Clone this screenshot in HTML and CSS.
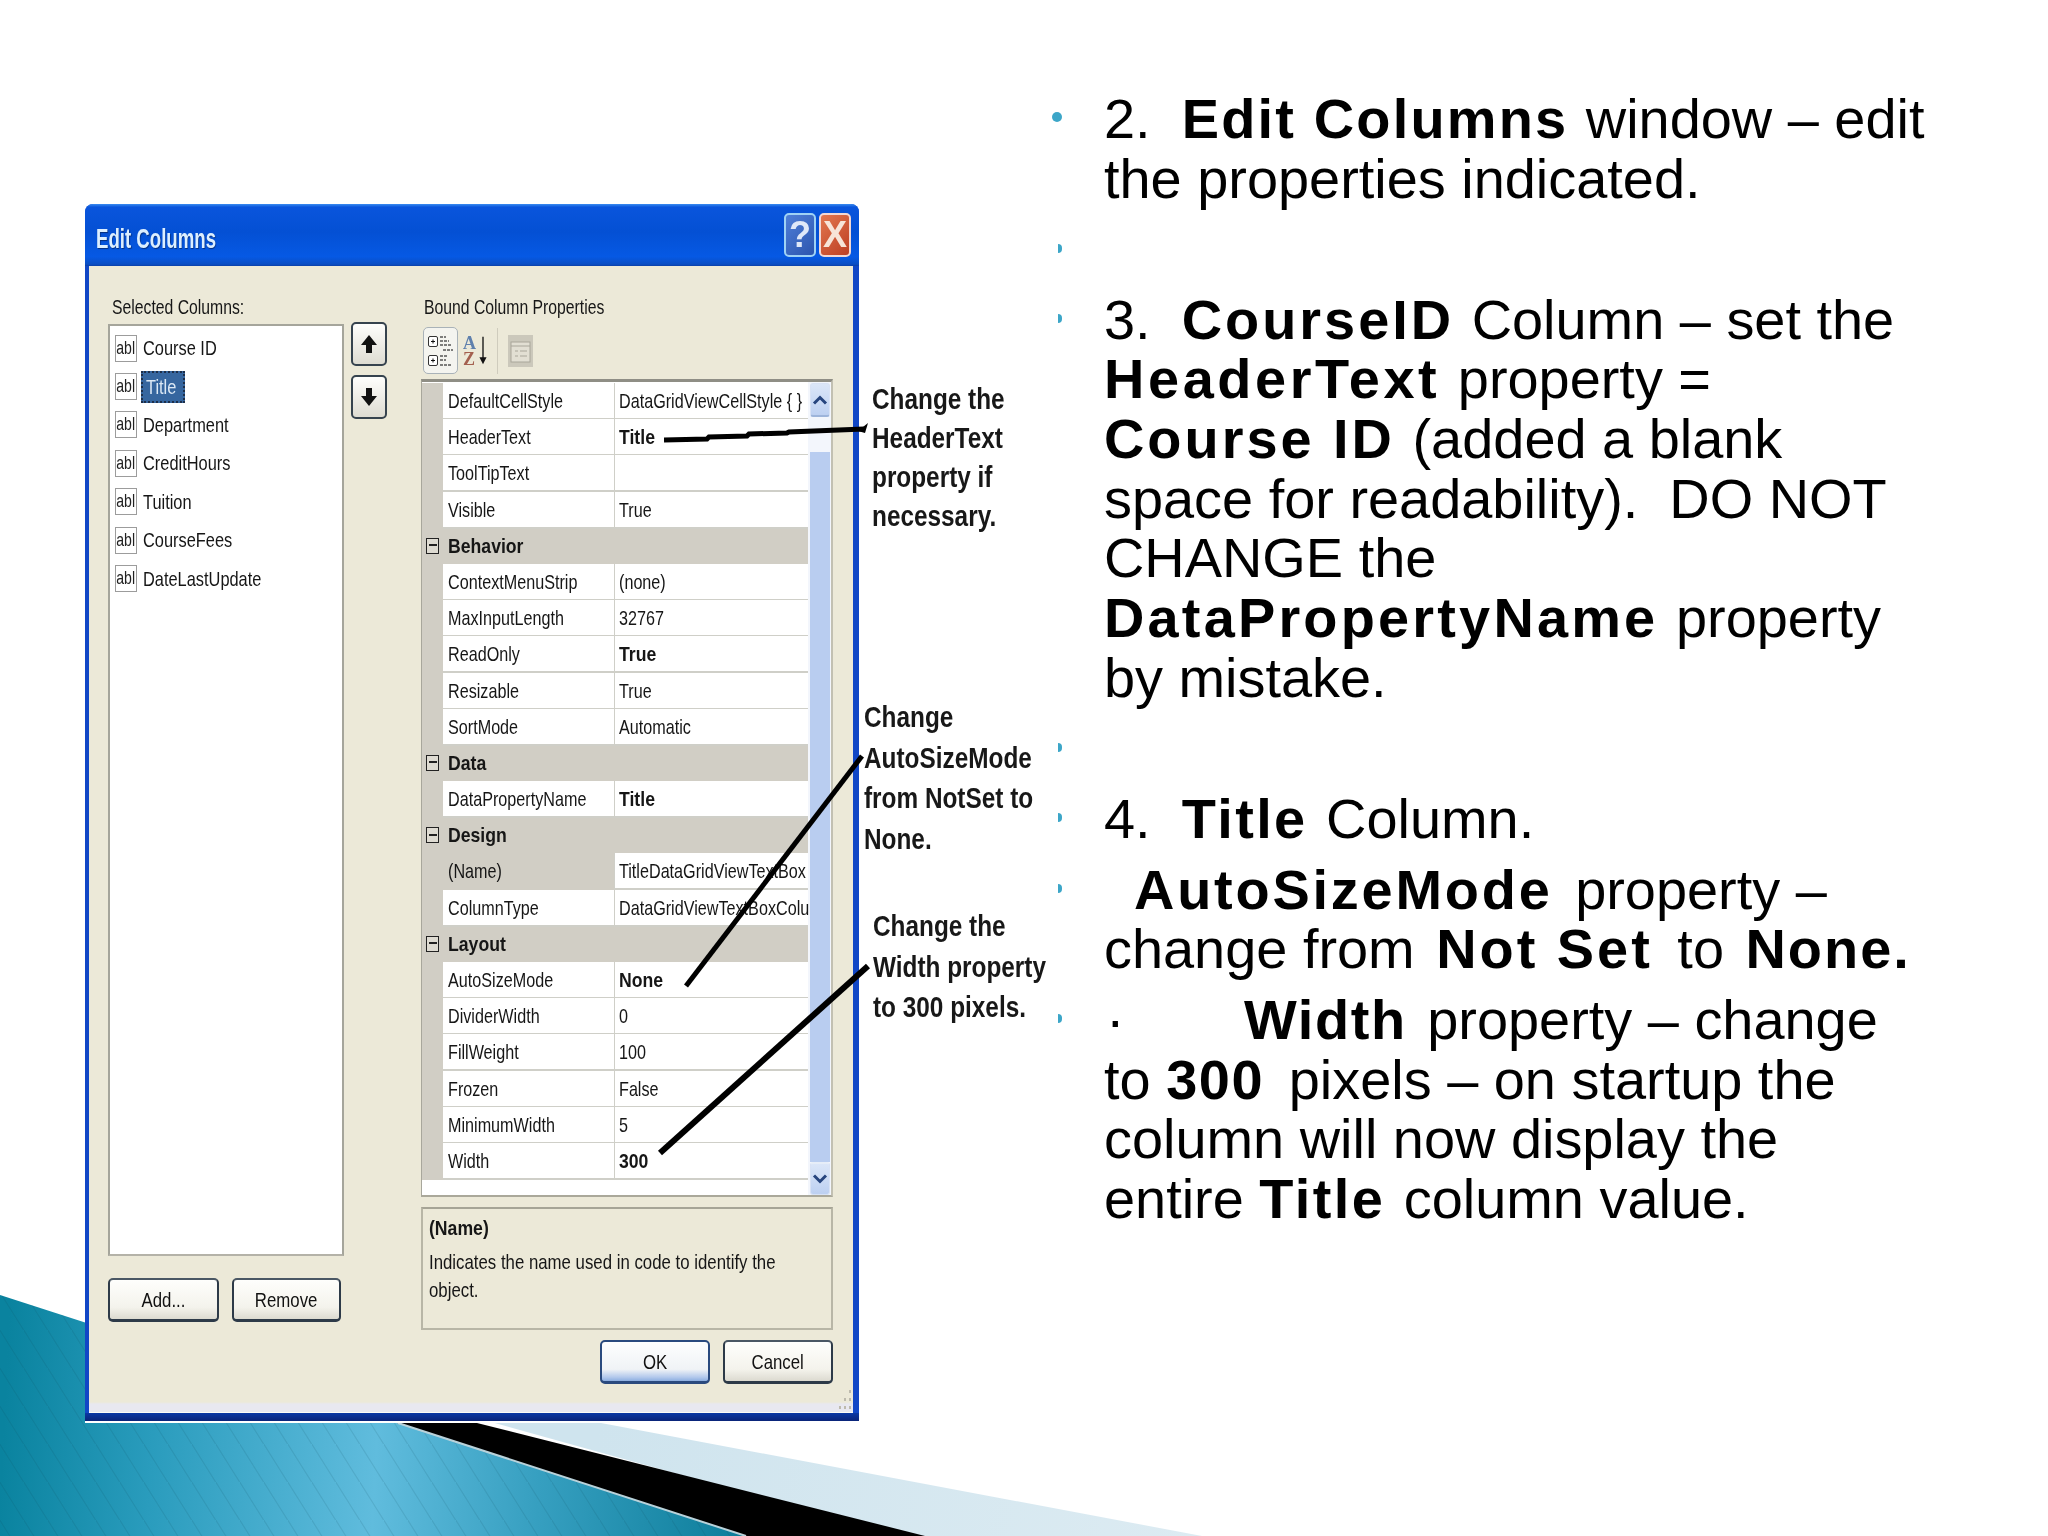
FILE: index.html
```html
<!DOCTYPE html>
<html lang="en">
<head>
<meta charset="utf-8">
<title>Edit Columns</title>
<link rel="stylesheet" href="styles.css">
</head>
<body>
<div class="slide">
  <svg class="deco" width="2048" height="1536" viewBox="0 0 2048 1536" aria-hidden="true">
    <defs>
      <linearGradient id="teal" gradientUnits="userSpaceOnUse" x1="0" y1="1500" x2="746" y2="1536">
        <stop offset="0" stop-color="#0a839f"/>
        <stop offset="0.2" stop-color="#2a9cbd"/>
        <stop offset="0.5" stop-color="#60bcdd"/>
        <stop offset="0.72" stop-color="#369fc0"/>
        <stop offset="1" stop-color="#0c7d9a"/>
      </linearGradient>
      <linearGradient id="pale" gradientUnits="userSpaceOnUse" x1="600" y1="1420" x2="1200" y2="1536">
        <stop offset="0" stop-color="#cfe4ee"/>
        <stop offset="1" stop-color="#dcebf2"/>
      </linearGradient>
      <pattern id="stripes" width="24" height="38" patternUnits="userSpaceOnUse">
        <path d="M-4 -6 L28 45" stroke="#063f52" stroke-opacity="0.12" stroke-width="1.2"/>
      </pattern>
    </defs>
    <polygon fill="url(#pale)" points="90,1310 601,1423 1202,1536 900,1536"/>
    <polygon fill="#000" points="112,1331 477,1423 925,1536 746,1536"/>
    <polygon fill="url(#teal)" points="0,1295 746,1536 0,1536"/>
    <polygon fill="url(#stripes)" points="0,1295 746,1536 0,1536"/>
    <path d="M398 1423 L746 1536" stroke="#b9d2da" stroke-width="2"/>
  </svg>

  <section class="dialog">
    <header class="titlebar">
      <span class="title"><span class="t">Edit Columns</span></span>
      <span class="caption-btns">
        <span class="cap-btn help">?</span>
        <span class="cap-btn close">X</span>
      </span>
    </header>
    <div class="dialog-body">
      <div class="left-pane">
        <div class="label"><span class="t">Selected Columns:</span></div>
        <ul class="col-list">
          <li class="col-item"><span class="abl"><span class="t">abl</span></span><span class="col-name"><span class="t">Course ID</span></span></li>
          <li class="col-item"><span class="abl"><span class="t">abl</span></span><span class="col-name selected"><span class="t">Title</span></span></li>
          <li class="col-item"><span class="abl"><span class="t">abl</span></span><span class="col-name"><span class="t">Department</span></span></li>
          <li class="col-item"><span class="abl"><span class="t">abl</span></span><span class="col-name"><span class="t">CreditHours</span></span></li>
          <li class="col-item"><span class="abl"><span class="t">abl</span></span><span class="col-name"><span class="t">Tuition</span></span></li>
          <li class="col-item"><span class="abl"><span class="t">abl</span></span><span class="col-name"><span class="t">CourseFees</span></span></li>
          <li class="col-item"><span class="abl"><span class="t">abl</span></span><span class="col-name"><span class="t">DateLastUpdate</span></span></li>
        </ul>
        <div class="btn-row">
          <button class="xp-btn add"><span class="t">Add...</span></button>
          <button class="xp-btn remove"><span class="t">Remove</span></button>
        </div>
      </div>

      <div class="move-pane">
        <button class="move-btn"><svg width="18" height="20" viewBox="0 0 18 20"><path d="M9 1 L17 11 H12 V19 H6 V11 H1 Z" fill="#111"/></svg></button>
        <button class="move-btn"><svg width="18" height="20" viewBox="0 0 18 20"><path d="M9 19 L17 9 H12 V1 H6 V9 H1 Z" fill="#111"/></svg></button>
      </div>

      <div class="right-pane">
        <div class="label right-label"><span class="t">Bound Column Properties</span></div>
        <div class="toolbar">
          <span class="tool-on">
            <svg width="28" height="38" viewBox="0 0 28 38">
              <rect x="1.5" y="4.5" width="9" height="10" rx="1.5" fill="#fff" stroke="#333"/>
              <path d="M4 9.5h4M6 7.5v4" stroke="#111"/>
              <path d="M13 5h6M13 9h9M13 13h12M16 18h10" stroke="#555" stroke-width="1.6" stroke-dasharray="3 1"/>
              <rect x="1.5" y="23.5" width="9" height="10" rx="1.5" fill="#fff" stroke="#333"/>
              <path d="M4 28.5h4M6 26.5v4" stroke="#111"/>
              <path d="M13 24h8M13 28h6M13 33h11" stroke="#555" stroke-width="1.6" stroke-dasharray="3 1"/>
            </svg>
          </span>
          <span class="az">
            <span class="az-letters"><span class="az-a">A</span><span class="az-z">Z</span></span>
            <svg width="9" height="32" viewBox="0 0 9 32"><path d="M4.5 0V25" stroke="#111" stroke-width="1.5"/><path d="M0.5 23H8.5L4.5 31Z" fill="#111"/></svg>
          </span>
          <span class="tool-sep"></span>
          <span class="tool-off"><svg width="25" height="32" viewBox="0 0 25 32"><rect width="25" height="32" fill="#cbc8bb"/><rect x="3" y="7" width="19" height="20" fill="#e2dfd3" stroke="#a9a69a"/><path d="M3 11h19M7 16h3M12 16h7M7 21h3M12 21h7" stroke="#a9a69a"/></svg></span>
        </div>

        <div class="grid">
          <div class="rows">
            <div class="row"><span class="gutter"></span><span class="name"><span class="t">DefaultCellStyle</span></span><span class="val"><span class="t">DataGridViewCellStyle { }</span></span></div>
            <div class="row"><span class="gutter"></span><span class="name"><span class="t">HeaderText</span></span><span class="val strong"><span class="t">Title</span></span></div>
            <div class="row"><span class="gutter"></span><span class="name"><span class="t">ToolTipText</span></span><span class="val"></span></div>
            <div class="row"><span class="gutter"></span><span class="name"><span class="t">Visible</span></span><span class="val"><span class="t">True</span></span></div>
            <div class="cat"><span class="gutter"><i class="minus"></i></span><span class="cat-name"><span class="t">Behavior</span></span></div>
            <div class="row"><span class="gutter"></span><span class="name"><span class="t">ContextMenuStrip</span></span><span class="val"><span class="t">(none)</span></span></div>
            <div class="row"><span class="gutter"></span><span class="name"><span class="t">MaxInputLength</span></span><span class="val"><span class="t">32767</span></span></div>
            <div class="row"><span class="gutter"></span><span class="name"><span class="t">ReadOnly</span></span><span class="val strong"><span class="t">True</span></span></div>
            <div class="row"><span class="gutter"></span><span class="name"><span class="t">Resizable</span></span><span class="val"><span class="t">True</span></span></div>
            <div class="row"><span class="gutter"></span><span class="name"><span class="t">SortMode</span></span><span class="val"><span class="t">Automatic</span></span></div>
            <div class="cat"><span class="gutter"><i class="minus"></i></span><span class="cat-name"><span class="t">Data</span></span></div>
            <div class="row"><span class="gutter"></span><span class="name"><span class="t">DataPropertyName</span></span><span class="val strong"><span class="t">Title</span></span></div>
            <div class="cat"><span class="gutter"><i class="minus"></i></span><span class="cat-name"><span class="t">Design</span></span></div>
            <div class="row"><span class="gutter"></span><span class="name picked"><span class="t">(Name)</span></span><span class="val"><span class="t">TitleDataGridViewTextBox</span></span></div>
            <div class="row"><span class="gutter"></span><span class="name"><span class="t">ColumnType</span></span><span class="val"><span class="t">DataGridViewTextBoxColu</span></span></div>
            <div class="cat"><span class="gutter"><i class="minus"></i></span><span class="cat-name"><span class="t">Layout</span></span></div>
            <div class="row"><span class="gutter"></span><span class="name"><span class="t">AutoSizeMode</span></span><span class="val strong"><span class="t">None</span></span></div>
            <div class="row"><span class="gutter"></span><span class="name"><span class="t">DividerWidth</span></span><span class="val"><span class="t">0</span></span></div>
            <div class="row"><span class="gutter"></span><span class="name"><span class="t">FillWeight</span></span><span class="val"><span class="t">100</span></span></div>
            <div class="row"><span class="gutter"></span><span class="name"><span class="t">Frozen</span></span><span class="val"><span class="t">False</span></span></div>
            <div class="row"><span class="gutter"></span><span class="name"><span class="t">MinimumWidth</span></span><span class="val"><span class="t">5</span></span></div>
            <div class="row"><span class="gutter"></span><span class="name"><span class="t">Width</span></span><span class="val strong"><span class="t">300</span></span></div>
          </div>
          <div class="scroll">
            <span class="scroll-btn"><svg width="16" height="10" viewBox="0 0 16 10"><path d="M2 8.5 L8 2.5 L14 8.5" fill="none" stroke="#27457e" stroke-width="3"/></svg></span>
            <span class="scroll-thumb"></span>
            <span class="scroll-btn scroll-end"><svg width="16" height="10" viewBox="0 0 16 10"><path d="M2 1.5 L8 7.5 L14 1.5" fill="none" stroke="#27457e" stroke-width="3"/></svg></span>
          </div>
        </div>

        <div class="help-box">
          <div class="help-title"><span class="t">(Name)</span></div>
          <div class="help-text"><span class="t">Indicates the name used in code to identify the</span><br><span class="t">object.</span></div>
        </div>

        <div class="btn-row end">
          <button class="xp-btn default"><span class="t">OK</span></button>
          <button class="xp-btn"><span class="t">Cancel</span></button>
        </div>
      </div>

      <svg class="grip" width="18" height="22" viewBox="0 0 18 22" aria-hidden="true"><g fill="#bdbaad"><rect x="14" y="1" width="2" height="3"/><rect x="14" y="9" width="2" height="3"/><rect x="9" y="9" width="2" height="3"/><rect x="14" y="17" width="2" height="3"/><rect x="9" y="17" width="2" height="3"/><rect x="4" y="17" width="2" height="3"/></g></svg>
    </div>
  </section>

  <div class="note note-a">Change the<br>HeaderText<br>property if<br>necessary.</div>
  <div class="note note-b">Change<br>AutoSizeMode<br>from NotSet to<br>None.</div>
  <div class="note note-c">Change the<br>Width property<br>to 300 pixels.</div>

  <svg class="pointers" width="2048" height="1536" viewBox="0 0 2048 1536" aria-hidden="true">
    <path d="M664 440 L707 439 L709 437 L747 436 L749 434 L787 433 L789 432 L864 429" fill="none" stroke="#000" stroke-width="5"/>
    <path d="M858 431 L868 423 L865 433 Z" fill="#000"/>
    <path d="M686 986 L862 756" fill="none" stroke="#000" stroke-width="5"/>
    <path d="M660 1153 L868 966" fill="none" stroke="#000" stroke-width="6"/>
  </svg>

  <div class="notes">
    <div class="item"><span class="dot"></span><p class="para">2.&nbsp; <b class="ls-edit">Edit Columns</b> window – edit<br>the properties indicated.</p></div>
    <div class="item"><span class="cut"></span><p class="para blank"></p></div>
    <div class="item"><span class="cut"></span><p class="para">3.&nbsp; <b>CourseID</b> Column – set the<br><b class="ls-wide">HeaderText</b> property =<br><b>Course ID</b> (added a blank<br>space for readability).&nbsp; DO NOT<br>CHANGE the<br><b class="ls-data">DataPropertyName</b> property<br>by mistake.</p></div>
    <div class="item"><span class="cut"></span><p class="para blank"></p></div>
    <div class="item"><span class="cut"></span><p class="para">4.&nbsp; <b class="ls-title">Title</b> Column.</p></div>
    <div class="item"><span class="cut"></span><p class="para"><span class="indent"></span><b class="gap-r">AutoSizeMode</b> property –<br>change from <b class="gap">Not Set</b> to <b class="ls-none gap-l">None.</b></p></div>
    <div class="item"><span class="cut"></span><p class="para"><span class="lead">·</span><b class="ls-low gap-s">Width</b> property – change<br>to <b class="ls-low gap-n">300</b> pixels – on startup the<br>column will now display the<br>entire <b class="ls-title">Title</b> column value.</p></div>
  </div>
</div>
</body>
</html>
```

FILE: styles.css
```css
* { box-sizing: border-box; }
html, body { margin: 0; padding: 0; background: #fff; }
.slide {
  position: relative;
  width: 2048px;
  height: 1536px;
  overflow: hidden;
  background: #fff;
  display: flex;
  align-items: flex-start;
  font-family: "Liberation Sans", Arial, sans-serif;
  color: #000;
}
.deco { position: absolute; left: 0; top: 0; }
.pointers { position: absolute; left: 0; top: 0; pointer-events: none; }

/* condensed text: the dialog is a horizontally squeezed capture */
.t {
  display: inline-block;
  white-space: nowrap;
  transform: scaleX(0.77);
  transform-origin: 0 50%;
}

/* dialog */
.dialog {
  position: relative;
  flex: none;
  width: 774px;
  height: 1217px;
  margin: 204px 0 0 85px;
  display: flex;
  flex-direction: column;
  background: linear-gradient(to top, #0a2478 0, #0a38a4 8px, #1147c6 8px);
  border-radius: 8px 8px 0 0;
  padding: 0 6px 8px 4px;
  box-shadow: 0 2px 0 #fff;
  font-size: 21px;
  color: #161616;
  filter: blur(0.45px);
}
.titlebar {
  flex: none;
  height: 62px;
  margin: 0 -6px 0 -4px;
  padding: 0 8px 0 11px;
  display: flex;
  align-items: center;
  justify-content: space-between;
  border-radius: 8px 8px 0 0;
  background: linear-gradient(#3a8cf0 0, #0a55dc 5%, #0450d4 45%, #0659e4 85%, #0a4ec4 97%, #0a3fa8 100%);
}
.title {
  padding-top: 8px;
  color: #dcefff;
  font-weight: 700;
  font-size: 28px;
  text-shadow: 1px 1px 1px #06307e;
}
.title .t { transform: scaleX(0.665); }
.caption-btns { display: flex; gap: 3px; }
.cap-btn {
  width: 32px;
  height: 44px;
  display: flex;
  align-items: center;
  justify-content: center;
  border: 2px solid #9fd2f5;
  border-radius: 5px;
  color: #dfe8f8;
  font-size: 36px;
  font-weight: 700;
}
.help { background: linear-gradient(135deg, #4f7fd8, #2c55ae); }
.close { background: linear-gradient(135deg, #e2764e, #bd3f24); border-color: #f2d8d4; color: #f7e4d8; }

.dialog-body {
  position: relative;
  flex: 1;
  display: flex;
  padding: 29px 0 0 19px;
  background: linear-gradient(to top, #e8e8f0 0, #e8e8f0 8px, #ece9d8 10px);
  border-bottom: 1px solid #fbfbf6;
}
.grip { position: absolute; right: 0; bottom: 1px; }
.left-pane { flex: none; width: 236px; display: flex; flex-direction: column; }
.label { height: 29px; line-height: 23px; padding-left: 4px; }
.left-pane .label .t, .right-label .t { transform: scaleX(0.75); }
.col-list {
  list-style: none;
  margin: 0;
  padding: 3px 0 0 5px;
  height: 932px;
  background: #fff;
  border: 2px solid #a5a59b;
  border-bottom-color: #b4b2a8;
}
.col-item { height: 38.4px; display: flex; align-items: center; gap: 4px; }
.abl {
  flex: none;
  width: 22px;
  height: 27px;
  border: 1.5px solid #9c9c9c;
  font-size: 19px;
  line-height: 23px;
  text-align: center;
  color: #222;
  overflow: visible;
}
.abl .t { transform: scaleX(0.74); transform-origin: 50% 50%; margin: 0 -4px; }
.col-name { display: block; padding: 0 0 0 2px; line-height: 28px; }
.col-name .t { transform: scaleX(0.78); }
.col-name.selected {
  margin-left: 0;
  width: 44px;
  padding: 2px 0 2px 5px;
  background: #36669f;
  color: #dbe8f5;
  outline: 2px dotted #1d2f4a;
  outline-offset: -2px;
}
.btn-row { display: flex; gap: 13px; margin-top: 22px; }
.btn-row.end { justify-content: flex-end; margin-top: 10px; }
.xp-btn {
  width: 110px;
  height: 44px;
  padding: 0;
  font: inherit;
  color: #111;
  border: 2px solid #2d3a48;
  border-top-color: #4a5764;
  border-bottom-width: 3px;
  border-radius: 5px;
  background: linear-gradient(#fefefc 0, #f4f3ec 70%, #dcdad0 100%);
}
.xp-btn .t { transform: scaleX(0.8); transform-origin: 50% 50%; }
.add { width: 111px; }
.remove { width: 109px; }
.default {
  border-color: #2a4a7e;
  background: linear-gradient(#fdfefe 0, #f0f3f6 70%, #b3c9ec 90%, #8caee0 100%);
}
.move-pane {
  flex: none;
  width: 36px;
  margin: 27px 34px 0 7px;
  display: flex;
  flex-direction: column;
  gap: 9px;
}
.move-btn {
  width: 36px;
  height: 44px;
  padding: 0;
  display: flex;
  align-items: center;
  justify-content: center;
  border: 2px solid #36434e;
  border-radius: 5px;
  background: linear-gradient(#fefefc, #dedcd2);
}
.right-pane { flex: none; width: 412px; display: flex; flex-direction: column; }
.right-label { height: 32px; padding-left: 3px; }
.toolbar {
  flex: none;
  height: 47px;
  margin-bottom: 5px;
  padding-left: 2px;
  display: flex;
  align-items: center;
}
.tool-on {
  width: 35px;
  height: 47px;
  display: flex;
  align-items: center;
  justify-content: center;
  background: #f4f4ef;
  border: 1.5px solid #a9b2b8;
  border-radius: 5px;
}
.az { display: flex; align-items: center; gap: 3px; margin-left: 5px; width: 24px; }
.az-letters {
  display: flex;
  flex-direction: column;
  font-family: "Liberation Serif", serif;
  font-weight: 700;
  font-size: 18px;
  line-height: 16px;
}
.az-a { color: #5f80ad; }
.az-z { color: #a4604f; }
.tool-sep { width: 1px; height: 46px; margin: 0 10px; background: #cfccbd; }
.tool-off { display: flex; }

.grid {
  flex: none;
  height: 818px;
  display: flex;
  background: #fff;
  border-top: 3px solid #8f8e85;
  border-left: 1px solid #a8a79c;
  border-right: 2px solid #c2c0b2;
  border-bottom: 2px solid #aaa89a;
}
.rows {
  flex: none;
  width: 386px;
  padding-top: 1px;
}
.row {
  height: 36.2px;
  display: grid;
  grid-template-columns: 21px 171px 194px;
  line-height: 35px;
}
.gutter { background: #d1cec5; }
.name {
  padding-left: 5px;
  background: #fff;
  border-bottom: 2px solid #cfcfc8;
  white-space: nowrap;
}
.picked { background: #d1cec5; border-bottom-color: #d1cec5; }
.val {
  padding-left: 4px;
  background: #fff;
  border-left: 1.5px solid #cfcfc8;
  border-bottom: 2px solid #cfcfc8;
  white-space: nowrap;
}
.strong { font-weight: 700; }
.strong .t, .cat-name .t, .help-title .t { transform: scaleX(0.84); }
.cat {
  height: 36.2px;
  display: flex;
  background: #d1cec5;
  font-weight: 700;
  line-height: 35px;
}
.cat .gutter { width: 21px; display: flex; align-items: center; justify-content: center; }
.cat-name { padding-left: 5px; }
.minus {
  position: relative;
  display: block;
  width: 13px;
  height: 16px;
  border: 1.5px solid #222;
  background: #dedbd2;
}
.minus::after {
  content: "";
  position: absolute;
  left: 1.5px;
  right: 1.5px;
  top: 5.5px;
  height: 2px;
  background: #222;
}
.scroll {
  flex: 1;
  display: flex;
  flex-direction: column;
  padding: 1px 1px 0 2px;
  background: #f3f6fc;
}
.scroll-btn {
  flex: none;
  height: 34px;
  display: flex;
  align-items: center;
  justify-content: center;
  background: linear-gradient(#dbe6f8, #bdd0f1);
  border: 1px solid #d8e2f5;
  border-bottom: 2px solid #9db4da;
  border-radius: 3px;
}
.scroll-thumb {
  flex: 1;
  margin-top: 35px;
  background: #b9cdf0;
}
.scroll-end { border-bottom: 1px solid #d8e2f5; border-top: 2px solid #e6edf8; height: 33px; }
.help-box {
  flex: none;
  height: 123px;
  margin-top: 10px;
  padding: 5px 6px 0;
  border: 2px solid #b8b6a6;
  border-top-color: #a6a496;
}
.help-title { font-weight: 700; height: 34px; line-height: 27px; }
.help-text { line-height: 27.5px; }
.help-text .t { transform: scaleX(0.8); }

/* callouts */
.note {
  position: absolute;
  font-size: 29px;
  font-weight: 700;
  color: #181818;
  white-space: nowrap;
  transform: scaleX(0.84);
  transform-origin: 0 0;
  filter: blur(0.4px);
}
.note-a { left: 872px; top: 380px; line-height: 39px; }
.note-b { left: 864px; top: 697px; line-height: 40.5px; }
.note-c { left: 873px; top: 906px; line-height: 40.5px; }

/* slide text */
.notes {
  position: relative;
  flex: none;
  margin: 89px 0 0 193px;
  display: flex;
  flex-direction: column;
  gap: 11.1px;
}
.item { display: flex; }
.dot {
  flex: none;
  width: 10px;
  height: 10px;
  margin: 23px 42px 0 0;
  border-radius: 50%;
  background: #3ca6c8;
}
.cut {
  flex: none;
  width: 4px;
  height: 9px;
  margin: 24px 42px 0 6px;
  border-radius: 0 5px 5px 0;
  background: #3ca6c8;
}
.para {
  margin: 0;
  font-size: 55.9px;
  line-height: 59.7px;
  white-space: nowrap;
  color: #000;
}
.para b { font-weight: 700; letter-spacing: 3px; margin-right: 2px; }
.para b.ls-wide { letter-spacing: 3.6px; }
.para b.ls-data { letter-spacing: 3.2px; }
.para b.ls-edit { letter-spacing: 2.2px; }
.para b.ls-title { letter-spacing: 2.4px; margin-right: 3px; }
.para b.ls-low { letter-spacing: 1.6px; }
.para b.ls-none { letter-spacing: 2px; }
.para b.gap-r { letter-spacing: 2.8px; margin-right: 7px; }
.para b.gap { margin: 0 9px 0 6px; }
.para b.gap-l { margin: 0 0 0 6px; }
.para b.gap-s { margin-right: 5px; }
.para b.gap-n { margin: 0 9px 0 0; }
.blank { height: 59px; }
.indent { display: inline-block; width: 30px; }
.lead { display: inline-block; width: 140px; padding-left: 2px; }
```
